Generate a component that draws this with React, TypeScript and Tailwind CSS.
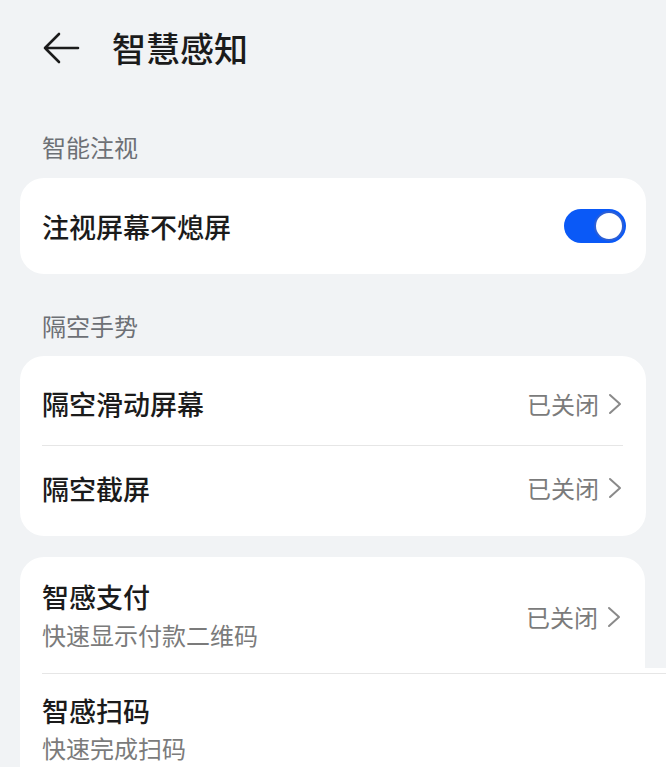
import React from "react";

const font = { fontFamily: '"Noto Sans CJK SC", "Noto Sans", sans-serif' };

function Chevron() {
  return (
    <svg width="16" height="24" viewBox="0 0 16 24" className="ml-[8px]">
      <path d="M3 3 L13 12 L3 21" fill="none" stroke="#8a8a8a" strokeWidth="2" strokeLinecap="round" strokeLinejoin="round" />
    </svg>
  );
}

function Toggle() {
  return (
    <div className="w-[62px] h-[34px] rounded-full bg-[#0a59f7] flex items-center justify-end pr-[2px]">
      <div className="w-[30px] h-[30px] rounded-full bg-white border-[2px] border-[#2c5fd6]" />
    </div>
  );
}

function Status() {
  return (
    <div className="flex items-center text-[24px] text-[#7b7b7b] leading-none">
      <span>已关闭</span>
      <Chevron />
    </div>
  );
}

export default function App() {
  return (
    <div style={font} className="w-[666px] h-[767px] overflow-hidden bg-[#f1f3f5]">
      {/* header */}
      <div className="h-[95px] flex items-center pl-[42px]">
        <svg width="38" height="34" viewBox="0 0 38 34">
          <path d="M36 17 H3 M17 3 L3 17 L17 31" fill="none" stroke="#1b1b1b" strokeWidth="2.6" strokeLinecap="round" strokeLinejoin="round" />
        </svg>
        <span className="ml-[32px] text-[34px] font-medium text-[#1b1b1b] leading-none">智慧感知</span>
      </div>

      {/* section 1 */}
      <div className="h-[83px] flex items-end pb-[19px] pl-[42px] text-[24px] text-[#6d7075] leading-none">
        智能注视
      </div>
      <div className="mx-[20px] h-[96px] rounded-[24px] bg-white flex items-center justify-between pl-[22px] pr-[20px]">
        <span className="text-[27px] font-medium text-[#1b1b1b] leading-none">注视屏幕不熄屏</span>
        <Toggle />
      </div>

      {/* section 2 */}
      <div className="h-[82px] flex items-end pb-[18px] pl-[42px] text-[24px] text-[#6d7075] leading-none">
        隔空手势
      </div>
      <div className="mx-[20px] rounded-[24px] bg-white pl-[22px] pr-[23px]">
        <div className="h-[90px] flex items-center justify-between border-b border-[#e6e6e6] pt-[6px]">
          <span className="text-[27px] font-medium text-[#1b1b1b] leading-none">隔空滑动屏幕</span>
          <Status />
        </div>
        <div className="h-[90px] flex items-center justify-between pb-[6px]">
          <span className="text-[27px] font-medium text-[#1b1b1b] leading-none">隔空截屏</span>
          <Status />
        </div>
      </div>

      {/* section 3 */}
      <div className="h-[21px]" />
      <div className="ml-[20px] mr-[21px] rounded-t-[24px] bg-white h-[111px] flex items-center justify-between pl-[22px] pr-[23px] pt-[4px]">
        <div className="flex flex-col">
          <span className="text-[27px] font-medium text-[#1b1b1b] leading-none">智感支付</span>
          <span className="mt-[13px] text-[24px] text-[#7b7b7b] leading-none">快速显示付款二维码</span>
        </div>
        <div className="pt-[4px]">
          <Status />
        </div>
      </div>
      <div className="ml-[20px] bg-white h-[110px] pt-[5px]">
        <div className="ml-[22px] border-t border-[#e6e6e6] pt-[23px] flex flex-col">
          <span className="text-[27px] font-medium text-[#1b1b1b] leading-none">智感扫码</span>
          <span className="mt-[12px] text-[24px] text-[#7b7b7b] leading-none">快速完成扫码</span>
        </div>
      </div>
    </div>
  );
}
